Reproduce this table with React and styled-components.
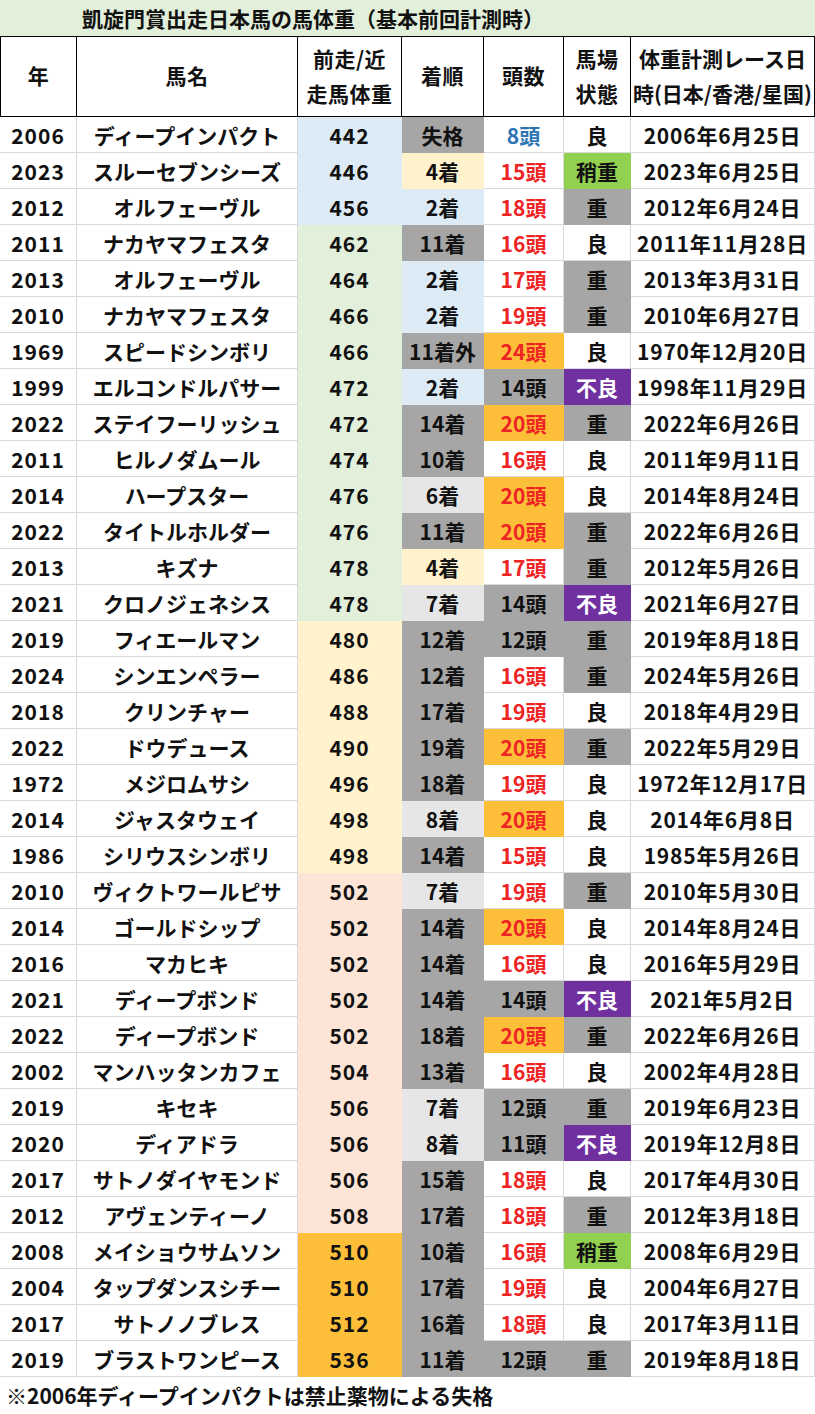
import React from "react";
import styled, { createGlobalStyle } from "styled-components";

const Global = createGlobalStyle`
  html, body { margin: 0; padding: 0; background: #fff; }
  body { font-family: "Noto Sans CJK JP", "Noto Sans", sans-serif; color: #111; }
`;

const COLS = "77px 221px 104px 82px 80px 67px 184px";

const C = {
  blue: "#ddebf7",
  green: "#e2efda",
  yellow: "#fff2cc",
  pink: "#fce4d6",
  orange: "#fdbf3a",
  gray: "#a6a6a6",
  lgray: "#e7e6e6",
  track: "#92d050",
  purple: "#7030a0",
  red: "#ee2424",
  bluetext: "#2e75b6",
};

const Page = styled.div`
  width: 815px;
  font-weight: 700;
  font-size: 21px;
`;

const Title = styled.div`
  height: 36px;
  line-height: 36px;
  background: ${C.green};
  padding-left: 82px;
  font-size: 21px;
  white-space: nowrap;
`;

const HeaderRow = styled.div`
  display: grid;
  grid-template-columns: ${COLS};
  height: 81px;
  border-top: 1px solid #000;
  box-sizing: border-box;
`;

const HeadCell = styled.div`
  display: flex;
  align-items: center;
  justify-content: center;
  text-align: center;
  border-right: 1px solid #000;
  border-bottom: 1px solid #000;
  ${(p) => (p.$first ? "border-left: 1px solid #000;" : "")}
  line-height: 35px;
  white-space: pre;
  letter-spacing: ${(p) => (p.$tight ? "0" : "0.5px")};
  padding-bottom: 2px;
  box-sizing: border-box;
`;

const Row = styled.div`
  display: grid;
  grid-template-columns: ${COLS};
  height: 36px;
`;

const Cell = styled.div`
  display: flex;
  align-items: center;
  justify-content: center;
  box-sizing: border-box;
  background: ${(p) => p.$bg || "#fff"};
  color: ${(p) => p.$color || "#111"};
  border-right: 1px solid ${(p) => p.$bg || "#d9d9d9"};
  border-bottom: 1px solid ${(p) => p.$bg || "#d9d9d9"};
  letter-spacing: ${(p) => (p.$ls != null ? p.$ls : "1px")};
  white-space: nowrap;
  padding-top: 1px;
`;

const Note = styled.div`
  height: 37px;
  line-height: 37px;
  padding-left: 6px;
  font-size: 21px;
  white-space: nowrap;
`;

const rows = [
  [2006, "ディープインパクト", 442, "失格", 8, "良", "2006年6月25日"],
  [2023, "スルーセブンシーズ", 446, "4着", 15, "稍重", "2023年6月25日"],
  [2012, "オルフェーヴル", 456, "2着", 18, "重", "2012年6月24日"],
  [2011, "ナカヤマフェスタ", 462, "11着", 16, "良", "2011年11月28日"],
  [2013, "オルフェーヴル", 464, "2着", 17, "重", "2013年3月31日"],
  [2010, "ナカヤマフェスタ", 466, "2着", 19, "重", "2010年6月27日"],
  [1969, "スピードシンボリ", 466, "11着外", 24, "良", "1970年12月20日"],
  [1999, "エルコンドルパサー", 472, "2着", 14, "不良", "1998年11月29日"],
  [2022, "ステイフーリッシュ", 472, "14着", 20, "重", "2022年6月26日"],
  [2011, "ヒルノダムール", 474, "10着", 16, "良", "2011年9月11日"],
  [2014, "ハープスター", 476, "6着", 20, "良", "2014年8月24日"],
  [2022, "タイトルホルダー", 476, "11着", 20, "重", "2022年6月26日"],
  [2013, "キズナ", 478, "4着", 17, "重", "2012年5月26日"],
  [2021, "クロノジェネシス", 478, "7着", 14, "不良", "2021年6月27日"],
  [2019, "フィエールマン", 480, "12着", 12, "重", "2019年8月18日"],
  [2024, "シンエンペラー", 486, "12着", 16, "重", "2024年5月26日"],
  [2018, "クリンチャー", 488, "17着", 19, "良", "2018年4月29日"],
  [2022, "ドウデュース", 490, "19着", 20, "重", "2022年5月29日"],
  [1972, "メジロムサシ", 496, "18着", 19, "良", "1972年12月17日"],
  [2014, "ジャスタウェイ", 498, "8着", 20, "良", "2014年6月8日"],
  [1986, "シリウスシンボリ", 498, "14着", 15, "良", "1985年5月26日"],
  [2010, "ヴィクトワールピサ", 502, "7着", 19, "重", "2010年5月30日"],
  [2014, "ゴールドシップ", 502, "14着", 20, "良", "2014年8月24日"],
  [2016, "マカヒキ", 502, "14着", 16, "良", "2016年5月29日"],
  [2021, "ディープボンド", 502, "14着", 14, "不良", "2021年5月2日"],
  [2022, "ディープボンド", 502, "18着", 20, "重", "2022年6月26日"],
  [2002, "マンハッタンカフェ", 504, "13着", 16, "良", "2002年4月28日"],
  [2019, "キセキ", 506, "7着", 12, "重", "2019年6月23日"],
  [2020, "ディアドラ", 506, "8着", 11, "不良", "2019年12月8日"],
  [2017, "サトノダイヤモンド", 506, "15着", 18, "良", "2017年4月30日"],
  [2012, "アヴェンティーノ", 508, "17着", 18, "重", "2012年3月18日"],
  [2008, "メイショウサムソン", 510, "10着", 16, "稍重", "2008年6月29日"],
  [2004, "タップダンスシチー", 510, "17着", 19, "良", "2004年6月27日"],
  [2017, "サトノノブレス", 512, "16着", 18, "良", "2017年3月11日"],
  [2019, "ブラストワンピース", 536, "11着", 12, "重", "2019年8月18日"],
];

function weightBg(i) {
  if (i < 3) return C.blue;
  if (i < 14) return C.green;
  if (i < 21) return C.yellow;
  if (i < 31) return C.pink;
  return C.orange;
}

function rankBg(r) {
  if (r === "2着") return C.blue;
  if (r === "4着") return C.yellow;
  if (["6着", "7着", "8着"].includes(r)) return C.lgray;
  return C.gray;
}

function headsStyle(n) {
  if (n < 10) return { color: C.bluetext };
  if (n <= 14) return { bg: C.gray };
  if (n < 20) return { color: C.red };
  return { color: C.red, bg: C.orange };
}

function trackStyle(t) {
  if (t === "稍重") return { bg: C.track };
  if (t === "重") return { bg: C.gray };
  if (t === "不良") return { bg: C.purple, color: "#fff" };
  return {};
}

const headers = [
  { t: "年", first: true },
  { t: "馬名" },
  { t: "前走/近\n走馬体重" },
  { t: "着順" },
  { t: "頭数" },
  { t: "馬場\n状態" },
  { t: "体重計測レース日\n時(日本/香港/星国)", tight: true },
];

export default function App() {
  return (
    <Page>
      <Global />
      <Title>凱旋門賞出走日本馬の馬体重（基本前回計測時）</Title>
      <HeaderRow>
        {headers.map((h, i) => (
          <HeadCell key={i} $first={h.first} $tight={h.tight}>
            {h.t}
          </HeadCell>
        ))}
      </HeaderRow>
      {rows.map((r, i) => {
        const [year, name, w, rank, heads, track, date] = r;
        const hs = headsStyle(heads);
        const ts = trackStyle(track);
        return (
          <Row key={i}>
            <Cell $ls="1px">{year}</Cell>
            <Cell $ls="0px">{name}</Cell>
            <Cell $bg={weightBg(i)}>{w}</Cell>
            <Cell $bg={rankBg(rank)} $ls="0px">{rank}</Cell>
            <Cell $bg={hs.bg} $color={hs.color} $ls="0px">{heads}頭</Cell>
            <Cell $bg={ts.bg} $color={ts.color} $ls="0px">{track}</Cell>
            <Cell $ls="0.8px">{date}</Cell>
          </Row>
        );
      })}
      <Note>※2006年ディープインパクトは禁止薬物による失格</Note>
    </Page>
  );
}
